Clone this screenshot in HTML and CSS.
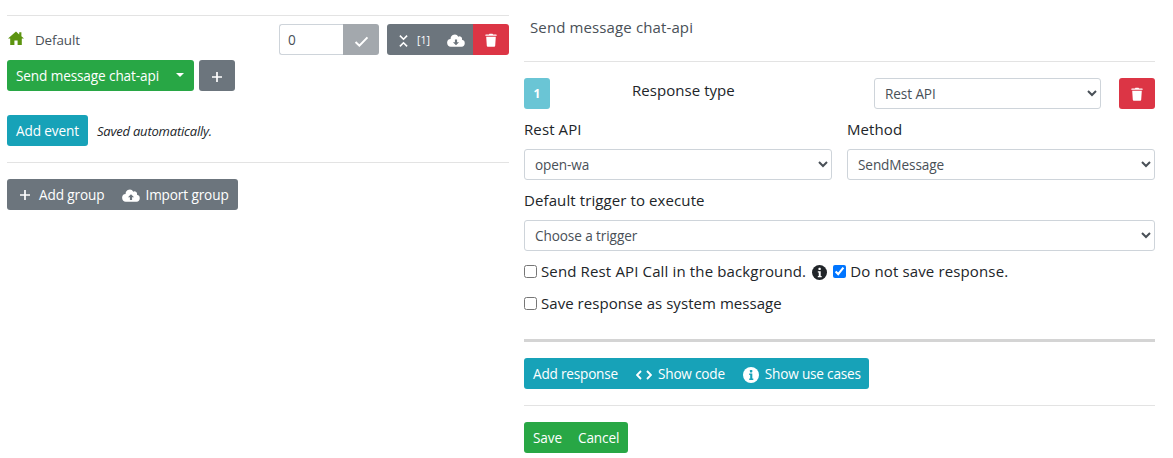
FILE: index.html
```html
<!DOCTYPE html>
<html lang="en">
<head>
<meta charset="utf-8">
<title>Send message chat-api</title>
<link rel="stylesheet" href="styles.css">
</head>
<body>
<svg class="defs" width="0" height="0" aria-hidden="true">
  <defs>
    <symbol id="trash" viewBox="0 0 14 16"><path d="M1 1.6h3.6L5.2.6h3.6l.6 1H13a.6.6 0 0 1 .6.6v.8H.4v-.8A.6.6 0 0 1 1 1.6zM1.4 4.2h11.2l-.7 10.6a1.2 1.2 0 0 1-1.2 1.1H3.3a1.2 1.2 0 0 1-1.2-1.1z" fill="currentColor"/></symbol>
    <symbol id="plus" viewBox="0 0 12 12"><path d="M6 1v10M1 6h10" stroke="currentColor" stroke-width="1.7" fill="none"/></symbol>
    <symbol id="cloud-up" viewBox="0 0 20 14"><path d="M16.6 6.2A2.9 2.9 0 0 0 12.6 2.7 4.6 4.6 0 0 0 4 5v.3A3.5 3.5 0 0 0 5 13.9h11.2a3.9 3.9 0 0 0 .4-7.7z" fill="currentColor"/><path d="M10 5.6l3.4 3.4h-2.2v3h-2.4V9H6.6z" fill="#6c757d"/></symbol>
    <symbol id="cloud-down" viewBox="0 0 20 14"><path d="M16.6 6.2A2.9 2.9 0 0 0 12.6 2.7 4.6 4.6 0 0 0 4 5v.3A3.5 3.5 0 0 0 5 13.9h11.2a3.9 3.9 0 0 0 .4-7.7z" fill="currentColor"/><path d="M10 12.4L6.6 9h2.2V6h2.4v3h2.2z" fill="#6c757d"/></symbol>
    <symbol id="info" viewBox="0 0 16 16"><circle cx="8" cy="8" r="8" fill="currentColor"/><rect x="6.9" y="3" width="2.4" height="2.4" rx=".6" class="dot"/><path d="M6.2 6.6h3.1v5h1v1.4H6.2v-1.4h1v-3.6h-1z" class="dot"/></symbol>
  </defs>
</svg>
<main class="page">
  <section class="left">
    <hr class="rule">
    <div class="group-head">
      <div class="group-name">
        <svg class="home" viewBox="0 0 16 14"><path d="M8 .6L0 7.6h2.2V14h4.2V9.4h3.2V14h4.2V7.6H16l-2.6-2.3V1.2h-2.2v2.2z" fill="#5c9410"/></svg>
        <span>Default</span>
      </div>
      <div class="order">
        <input class="order-input" type="text" value="0">
        <button class="btn btn-muted order-ok" type="button"><svg class="ic-check" viewBox="0 0 16 12"><path d="M1.5 6.5l4.2 4L14.5 1.5" stroke="currentColor" stroke-width="2.2" fill="none"/></svg></button>
      </div>
      <div class="btn-group">
        <button class="btn btn-gray tool collapse" type="button"><svg class="ic-collapse" viewBox="0 0 10 14"><path d="M1 1l4 4 4-4M1 13l4-4 4 4" stroke="currentColor" stroke-width="1.8" fill="none"/></svg><span class="count">[1]</span></button>
        <button class="btn btn-gray tool cloud" type="button"><svg class="ic-cloud"><use href="#cloud-down"/></svg></button>
        <button class="btn btn-red tool trash-btn" type="button"><svg class="ic-trash"><use href="#trash"/></svg></button>
      </div>
    </div>
    <div class="event-row">
      <button class="btn btn-green event-btn" type="button">Send message chat-api<i class="caret"></i></button>
      <button class="btn btn-gray add-btn" type="button"><svg class="ic-plus"><use href="#plus"/></svg></button>
    </div>
    <div class="add-event-row">
      <button class="btn btn-teal add-event" type="button">Add event</button>
      <em class="saved">Saved automatically.</em>
    </div>
    <hr class="rule rule-mid">
    <div class="btn-group inline-group">
      <button class="btn btn-gray g1" type="button"><svg class="ic-plus"><use href="#plus"/></svg>Add group</button>
      <button class="btn btn-gray g2" type="button"><svg class="ic-cloud"><use href="#cloud-up"/></svg>Import group</button>
    </div>
  </section>

  <section class="right">
    <h1 class="title">Send message chat-api</h1>
    <hr class="rule rule-title">
    <div class="type-row">
      <span class="badge">1</span>
      <span class="type-label">Response type</span>
      <select class="field type-select"><option>Rest API</option></select>
      <button class="btn btn-red del" type="button"><svg class="ic-trash"><use href="#trash"/></svg></button>
    </div>
    <div class="two-col">
      <div class="col">
        <label class="label">Rest API</label>
        <select class="field"><option>open-wa</option></select>
      </div>
      <div class="col">
        <label class="label">Method</label>
        <select class="field"><option>SendMessage</option></select>
      </div>
    </div>
    <label class="label trigger-label">Default trigger to execute</label>
    <select class="field"><option>Choose a trigger</option></select>
    <div class="check-row first">
      <label class="check"><input type="checkbox">Send Rest API Call in the background.</label>
      <svg class="ic-info dark"><use href="#info"/></svg>
      <label class="check"><input type="checkbox" checked>Do not save response.</label>
    </div>
    <div class="check-row second">
      <label class="check"><input type="checkbox">Save response as system message</label>
    </div>
    <hr class="thick">
    <div class="btn-group inline-group">
      <button class="btn btn-teal r1" type="button">Add response</button>
      <button class="btn btn-teal r2" type="button"><svg class="ic-code" viewBox="0 0 16 10"><path d="M5 1L1 5l4 4M11 1l4 4-4 4" stroke="currentColor" stroke-width="1.9" fill="none"/></svg>Show code</button>
      <button class="btn btn-teal r3" type="button"><svg class="ic-info light"><use href="#info"/></svg>Show use cases</button>
    </div>
    <hr class="rule rule-foot">
    <div class="btn-group inline-group">
      <button class="btn btn-green s1" type="button">Save</button>
      <button class="btn btn-green s2" type="button">Cancel</button>
    </div>
  </section>
</main>
</body>
</html>
```
FILE: styles.css
```css
* { box-sizing: border-box; }
html, body { margin: 0; padding: 0; background: #fff; }
body { font-family: "Open Sans", "Noto Sans", "Liberation Sans", sans-serif; font-size: 13.6px; color: #212529; overflow: hidden; }
.defs { position: absolute; }
.page { display: flex; gap: 15px; padding: 0 18px 0 7px; width: 1173px; height: 458px; }
.left { width: 502px; flex: none; padding-top: 15px; }
.right { flex: 1; min-width: 0; }
.rule { border: 0; border-top: 1px solid #e3e3e3; margin: 0; }

.btn { display: inline-flex; align-items: center; height: 31px; border: 0; border-radius: 3px; padding: 0 9px; font: inherit; font-size: 13.6px; letter-spacing: -.12px; color: #fff; white-space: nowrap; }
.btn-gray { background: #6c757d; }
.btn-muted { background: #a3a8ad; }
.btn-green { background: #28a745; }
.btn-teal { background: #17a2b8; }
.btn-red { background: #dc3545; }
.btn-group { display: flex; }
.inline-group { width: max-content; }
.btn-group .btn { border-radius: 0; }
.btn-group .btn:first-child { border-radius: 3px 0 0 3px; }
.btn-group .btn:last-child { border-radius: 0 3px 3px 0; }

.group-head { display: flex; align-items: center; margin-top: 8px; height: 31px; }
.group-name { display: flex; align-items: center; flex: 1; color: #495057; font-size: 13.4px; letter-spacing: -.1px; }
.home { width: 16px; height: 14px; margin: -4px 11px 0 1px; }
.order { display: flex; margin-right: 8px; }
.order-input { width: 64px; height: 31px; padding: 0 8px; border: 1px solid #ced4da; border-right: 0; border-radius: 3px 0 0 3px; font: inherit; font-size: 13.6px; color: #495057; outline: 0; }
.order-ok { width: 36px; justify-content: center; border-radius: 0 3px 3px 0; padding: 0; }
.ic-check { width: 15px; height: 11px; margin-top: 3px; }
.tool { justify-content: center; padding: 0; }
.collapse { width: 49px; gap: 9px; padding-left: 6px; }
.ic-collapse { width: 9px; height: 14px; margin-top: 2px; }
.count { font-size: 10.5px; letter-spacing: 0; }
.cloud { width: 37px; }
.cloud .ic-cloud { margin-left: 2px; margin-top: 2px; }
.trash-btn { width: 36px; }
.ic-cloud { width: 18px; height: 13px; }
.ic-trash { width: 12px; height: 14px; }
.ic-plus { width: 12px; height: 12px; }

.event-row { display: flex; gap: 5px; margin-top: 5px; }
.event-btn { width: 187px; justify-content: flex-start; position: relative; }
.caret { position: absolute; left: 169px; top: 13px; border-top: 4.5px solid #fff; border-left: 4.5px solid transparent; border-right: 4.5px solid transparent; }
.add-btn { width: 36px; justify-content: center; }
.add-btn .ic-plus { margin-top: 3px; }
.add-event-row { display: flex; align-items: center; gap: 9px; margin-top: 24px; }
.saved { font-size: 13px; letter-spacing: -.2px; color: #212529; }
.rule-mid { margin-top: 16px; }
.left .inline-group { margin-top: 16px; }
.g1 { padding: 0 6px 0 12px; }
.g1 .ic-plus { margin-right: 8px; margin-top: 1px; }
.g2 { padding: 0 9px 0 12px; }
.g2 .ic-cloud { margin-right: 5px; margin-top: 2px; }

.title { margin: 0; padding: 17px 0 0 6px; height: 61px; font-size: 15px; font-weight: 400; letter-spacing: .12px; line-height: 20px; color: #495057; }
.type-row { display: flex; margin-top: 16px; height: 31px; }
.badge { width: 26px; height: 31px; background: #6ac5d5; border-radius: 3px; color: #fff; font-size: 12px; font-weight: 700; display: flex; align-items: center; justify-content: center; }
.type-label { margin-left: 82px; width: 242px; font-size: 15px; letter-spacing: .05px; line-height: 24px; color: #212529; }
.type-select { width: 227px !important; }
.del { width: 36px; margin-left: 18px; justify-content: center; padding: 0; }
.field { display: block; width: 100%; height: 31px; padding: 0 6px; border: 1px solid #ced4da; border-radius: 3px; background: #fff; font: inherit; font-size: 13.6px; letter-spacing: -.1px; color: #495057; outline: 0; }
.two-col { display: flex; gap: 15px; margin-top: 8px; }
.col { flex: 1; min-width: 0; }
.label { display: block; height: 32px; font-size: 15px; letter-spacing: .1px; line-height: 24px; color: #212529; margin-top: 0; }
.trigger-label { margin-top: 8px; height: 32px; }
.check-row { display: flex; align-items: center; height: 20px; font-size: 15px; letter-spacing: .14px; color: #212529; }
.check-row.first { margin-top: 10px; }
.check-row.second { margin-top: 12px; letter-spacing: .05px; }
.check { display: flex; align-items: center; }
.check input { width: 13px; height: 13px; margin: 0 4px 0 0; }
.ic-info { width: 15px; height: 15px; }
.ic-info.dark { margin: 2px 6px 0 6px; color: #212529; --dot: #fff; }
.ic-info.light { color: #fff; --dot: #17a2b8; width: 16px; height: 16px; }
.dot { fill: var(--dot); }
.thick { border: 0; border-top: 3px solid #d4d4d4; margin: 26px 0 0; }
.right .inline-group { margin-top: 16px; }
.r1, .r2, .r3 { letter-spacing: -.2px; }
.r2, .r3 { padding-left: 0; }
.r1 { padding-right: 18px; }
.r2 { padding-right: 18px; }
.r3 { padding-right: 8px; }
.ic-code { width: 16px; height: 10px; margin-right: 6px; margin-top: 2px; }
.r3 .ic-info { margin-right: 6px; margin-top: 2px; }
.rule-foot { margin-top: 16px; }
.s1 { padding-right: 8px; }
.s2 { padding-left: 8px; }
```
